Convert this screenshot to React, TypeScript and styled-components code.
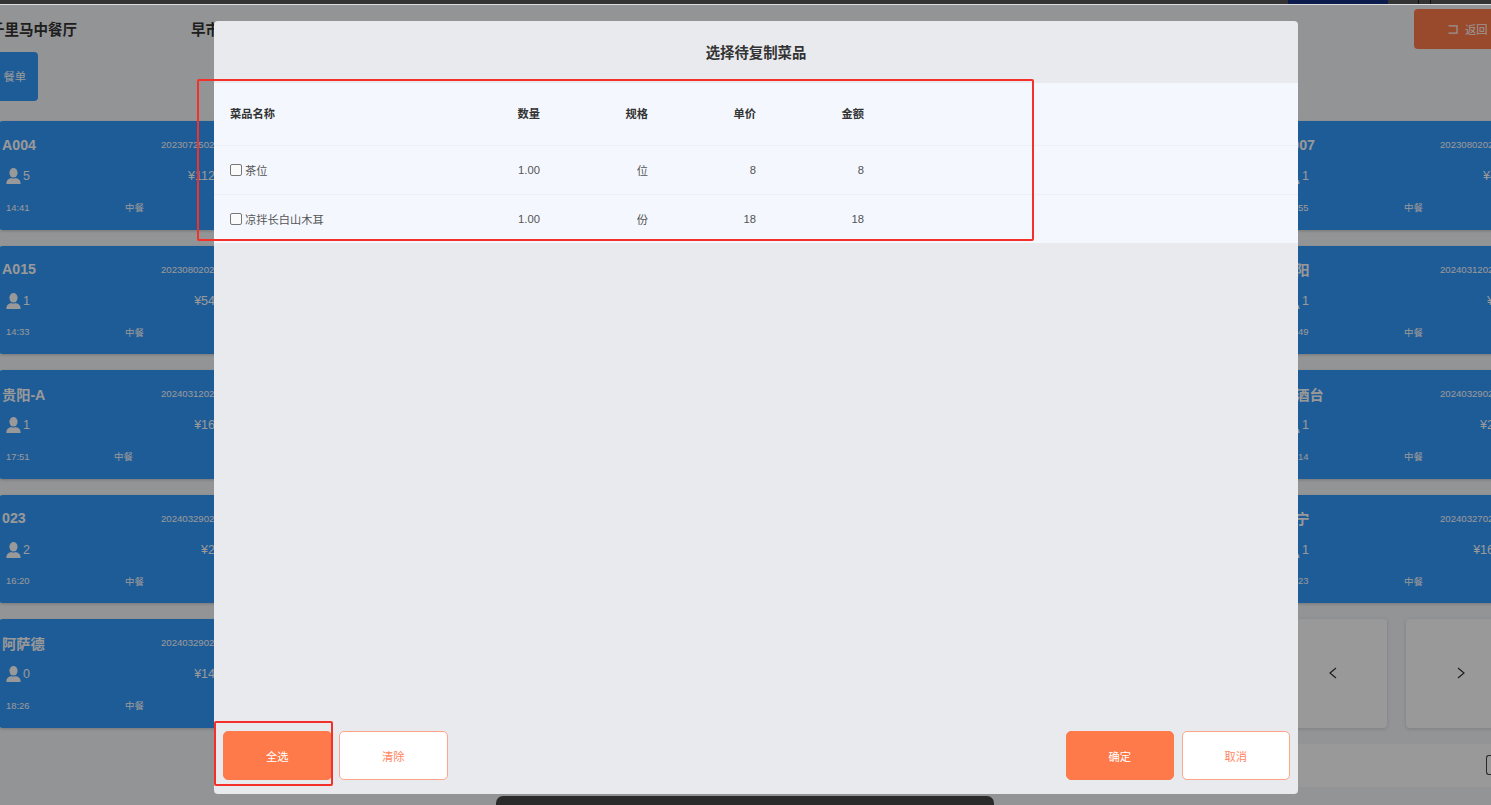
import React from "react";
import styled, { createGlobalStyle } from "styled-components";

const Global = createGlobalStyle`
  html, body { margin: 0; padding: 0; height: 100%; overflow: hidden; background: #f5f7fa; }
  #root { height: 100%; }
  * { box-sizing: border-box; }
  body { font-family: "Liberation Sans", "Noto Sans CJK SC", sans-serif; }
`;

const Screen = styled.div`
  position: relative;
  width: 1491px;
  height: 805px;
  overflow: hidden;
  background: #f5f7fa;
`;

const BrowserStrip = styled.div`
  height: 5px;
  display: flex;
  background: #333;
  border-bottom: 1px solid #dcdcdc;
  padding-left: 1288px;
`;
const StripTab = styled.div`
  width: 100px;
  background: #0b1b4d;
`;
const StripDivider = styled.div<{ $gap: number }>`
  width: 1px;
  margin-left: ${(p) => p.$gap}px;
  background: #111;
`;

const Header = styled.header`
  height: 116px;
  display: flex;
  justify-content: space-between;
`;
const HeaderLeft = styled.div`
  display: flex;
  flex-direction: column;
  padding-top: 16px;
  margin-left: -10px;
`;
const Titles = styled.div`
  display: flex;
  gap: 114px;
  height: 31px;
  font-size: 14.5px;
  line-height: 18px;
  font-weight: 700;
  color: #333;
`;
const MenuButton = styled.div`
  width: 48px;
  height: 49px;
  display: flex;
  align-items: center;
  justify-content: flex-end;
  padding: 0 12px 2px 0;
  border-radius: 4px;
  background: #3299fd;
  color: #fff;
  font-size: 11.25px;
`;
const BackButton = styled.div`
  width: 120px;
  height: 40px;
  margin: 4px -43px 0 0;
  padding-left: 34px;
  display: flex;
  align-items: center;
  gap: 7px;
  flex-shrink: 0;
  border-radius: 4px;
  background: #ff7a4a;
  color: #fff;
  font-size: 11.25px;
`;

const Board = styled.main`
  display: grid;
  grid-template-columns: 300px 300px;
  justify-content: space-between;
  width: 1579px;
  margin-left: -1px;
`;
const Column = styled.div`
  display: grid;
  grid-auto-rows: 108.5px;
  row-gap: 16px;
`;
const Card = styled.article`
  padding: 0 0 0 3px;
  display: grid;
  grid-template-rows: 47px 16px 46px;
  border-radius: 4px;
  background: #3299fd;
  color: #fff;
  box-shadow: 0 1px 3px rgba(0, 0, 0, 0.2);
`;
const CardTop = styled.div`
  display: grid;
  grid-template-columns: 159px 1fr;
  align-items: center;
`;
const TableName = styled.div`
  font-size: 14.2px;
  font-weight: 700;
`;
const OrderNo = styled.div`
  font-size: 9.6px;
  white-space: nowrap;
`;
const CardMiddle = styled.div<{ $width: number }>`
  width: ${(p) => p.$width}px;
  display: flex;
  justify-content: space-between;
  align-items: center;
  padding-left: 4px;
  font-size: 12.5px;
`;
const Guests = styled.div`
  display: flex;
  align-items: center;
  gap: 2px;
`;
const CardBottom = styled.div<{ $meal: number }>`
  display: grid;
  grid-template-columns: ${(p) => p.$meal}px auto;
  align-items: center;
  align-self: center;
  padding-left: 4px;
  font-size: 9.4px;
  height: 20px;
`;
const NavRow = styled.div`
  display: flex;
  gap: 19px;
`;
const NavButton = styled.div`
  width: 109px;
  display: flex;
  align-items: center;
  justify-content: center;
  border-radius: 4px;
  background: #fff;
  color: #333;
  box-shadow: 0 1px 4px rgba(0, 0, 0, 0.15);
`;
const KeypadBar = styled.div`
  height: 43px;
  width: 700px;
  margin: 16px 0 0 auto;
  display: flex;
  align-items: center;
  justify-content: flex-end;
  background: #fff;
`;
const KeypadIcon = styled.div`
  width: 5px;
  height: 20px;
  border: 1px solid #444;
  border-right: none;
  border-radius: 3px 0 0 3px;
`;

const Scrim = styled.div`
  position: absolute;
  inset: 5px 0 0 0;
  padding: 16px 193px 11px 214px;
  display: flex;
  background: rgba(0, 0, 0, 0.4);
`;
const Modal = styled.section`
  flex: 1;
  display: flex;
  flex-direction: column;
  border-radius: 4px;
  background: #e9eaee;
`;
const ModalTitle = styled.h2`
  margin: 0;
  height: 62px;
  padding-bottom: 2px;
  display: flex;
  align-items: center;
  justify-content: center;
  font-size: 14.4px;
  font-weight: 700;
  color: #333;
`;
const DishTable = styled.div`
  background: #f4f8fe;
`;
const Row = styled.div<{ $head?: boolean }>`
  height: ${(p) => (p.$head ? 63 : 49)}px;
  display: grid;
  grid-template-columns: 202px repeat(4, 108px);
  align-items: center;
  padding: 0 0 ${(p) => (p.$head ? 2 : 0)}px 16px;
  font-size: 11.25px;
  font-weight: ${(p) => (p.$head ? 700 : 400)};
  color: ${(p) => (p.$head ? "#333" : "#555")};
  border-bottom: 1px solid #edeff3;
  &:last-child { border-bottom: none; height: 48px; }
`;
const Cell = styled.div`
  text-align: right;
`;
const NameCell = styled.label`
  display: flex;
  align-items: center;
  gap: 3px;
`;
const Check = styled.input.attrs({ type: "checkbox" })`
  appearance: none;
  margin: 0;
  width: 12px;
  height: 12px;
  border: 1px solid #777;
  border-radius: 2px;
  background: #fafafa;
`;
const Spacer = styled.div`
  flex: 1;
`;
const ModalFooter = styled.footer`
  display: flex;
  justify-content: space-between;
  padding: 0 8px 14px 9px;
`;
const ButtonGroup = styled.div`
  display: flex;
  gap: 7.5px;
`;
const ActionButton = styled.button<{ $primary?: boolean }>`
  width: 108.5px;
  height: 49px;
  padding: 0;
  border-radius: 5px;
  border: 1.5px solid ${(p) => (p.$primary ? "#ff7a4a" : "#ffa488")};
  background: ${(p) => (p.$primary ? "#ff7a4a" : "#fff")};
  color: ${(p) => (p.$primary ? "#fff" : "#ff8560")};
  font: inherit;
  font-size: 11.25px;
`;
const Annotation = styled.div<{ $l: number; $t: number; $w: number; $h: number }>`
  position: absolute;
  left: ${(p) => p.$l}px;
  top: ${(p) => p.$t}px;
  width: ${(p) => p.$w}px;
  height: ${(p) => p.$h}px;
  border: 2.5px solid #f5302a;
  border-radius: 2px;
`;
const Taskbar = styled.div`
  position: absolute;
  left: 496px;
  top: 796px;
  width: 498px;
  height: 9px;
  border-radius: 7px 7px 0 0;
  background: #2a2a2a;
`;

const PersonIcon = () => (
  <svg width="15" height="16" viewBox="0 0 15 16" fill="currentColor">
    <ellipse cx="7.5" cy="4.8" rx="4.1" ry="4.8" />
    <path d="M0.4 16c0-3.6 1.4-5 4.8-6 1.4.8 3.2.8 4.6 0 3.4 1 4.8 2.4 4.8 6z" />
  </svg>
);
const BackIcon = () => (
  <svg width="10" height="9" viewBox="0 0 10 9" fill="none" stroke="currentColor" strokeWidth="1.2">
    <path d="M0.5 0.8H9V8.2H0.5" />
  </svg>
);
const Chevron = ({ dir }: { dir: "l" | "r" }) => (
  <svg width="10" height="12" viewBox="0 0 10 12" fill="none" stroke="currentColor" strokeWidth="1.2">
    <path d={dir === "l" ? "M8 1L2 6l6 5" : "M2 1l6 5-6 5"} />
  </svg>
);

type Order = { name: string; no: string; guests: number; amount: string; time: string; meal: number; width: number };
const left: Order[] = [
  { name: "A004", no: "202307250206", guests: 5, amount: "¥112", time: "14:41", meal: 119, width: 213 },
  { name: "A015", no: "202308020206", guests: 1, amount: "¥54", time: "14:33", meal: 119, width: 213 },
  { name: "贵阳-A", no: "202403120206", guests: 1, amount: "¥16", time: "17:51", meal: 108, width: 213 },
  { name: "023", no: "202403290206", guests: 2, amount: "¥2", time: "16:20", meal: 119, width: 213 },
  { name: "阿萨德", no: "202403290206", guests: 0, amount: "¥14", time: "18:26", meal: 119, width: 213 },
];
const right: Order[] = [
  { name: "A007", no: "202308020206", guests: 1, amount: "¥4", time: "14:55", meal: 119, width: 216 },
  { name: "贵阳", no: "202403120206", guests: 1, amount: "¥1", time: "14:49", meal: 119, width: 220 },
  { name: "前酒台", no: "202403290206", guests: 1, amount: "¥2", time: "14:14", meal: 119, width: 213 },
  { name: "南宁", no: "202403270206", guests: 1, amount: "¥16", time: "14:23", meal: 119, width: 213 },
];

const OrderCard = ({ o }: { o: Order }) => (
  <Card>
    <CardTop>
      <TableName>{o.name}</TableName>
      <OrderNo>{o.no}</OrderNo>
    </CardTop>
    <CardMiddle $width={o.width}>
      <Guests>
        <PersonIcon />
        {o.guests}
      </Guests>
      <span>{o.amount}</span>
    </CardMiddle>
    <CardBottom $meal={o.meal}>
      <span>{o.time}</span>
      <span>中餐</span>
    </CardBottom>
  </Card>
);

const dishes = [
  { name: "茶位", qty: "1.00", unit: "位", price: "8", total: "8" },
  { name: "凉拌长白山木耳", qty: "1.00", unit: "份", price: "18", total: "18" },
];

export default function App() {
  return (
    <Screen>
      <Global />
      <BrowserStrip>
        <StripTab />
        <StripDivider $gap={30} />
        <StripDivider $gap={11} />
      </BrowserStrip>
      <Header>
        <HeaderLeft>
          <Titles>
            <span>千里马中餐厅</span>
            <span>早市</span>
          </Titles>
          <MenuButton>餐单</MenuButton>
        </HeaderLeft>
        <BackButton>
          <BackIcon />
          返回
        </BackButton>
      </Header>
      <Board>
        <Column>
          {left.map((o) => (
            <OrderCard key={o.name} o={o} />
          ))}
        </Column>
        <Column>
          {right.map((o) => (
            <OrderCard key={o.name} o={o} />
          ))}
          <NavRow>
            <NavButton>
              <Chevron dir="l" />
            </NavButton>
            <NavButton>
              <Chevron dir="r" />
            </NavButton>
          </NavRow>
        </Column>
      </Board>
      <KeypadBar>
        <KeypadIcon />
      </KeypadBar>

      <Scrim>
        <Modal>
          <ModalTitle>选择待复制菜品</ModalTitle>
          <DishTable>
            <Row $head>
              <div>菜品名称</div>
              <Cell>数量</Cell>
              <Cell>规格</Cell>
              <Cell>单价</Cell>
              <Cell>金额</Cell>
            </Row>
            {dishes.map((d) => (
              <Row key={d.name}>
                <NameCell>
                  <Check />
                  {d.name}
                </NameCell>
                <Cell>{d.qty}</Cell>
                <Cell>{d.unit}</Cell>
                <Cell>{d.price}</Cell>
                <Cell>{d.total}</Cell>
              </Row>
            ))}
          </DishTable>
          <Spacer />
          <ModalFooter>
            <ButtonGroup>
              <ActionButton $primary>全选</ActionButton>
              <ActionButton>清除</ActionButton>
            </ButtonGroup>
            <ButtonGroup>
              <ActionButton $primary>确定</ActionButton>
              <ActionButton>取消</ActionButton>
            </ButtonGroup>
          </ModalFooter>
        </Modal>
      </Scrim>
      <Annotation $l={197} $t={79} $w={837} $h={162} />
      <Annotation $l={214} $t={721} $w={119} $h={65} />
      <Taskbar />
    </Screen>
  );
}
